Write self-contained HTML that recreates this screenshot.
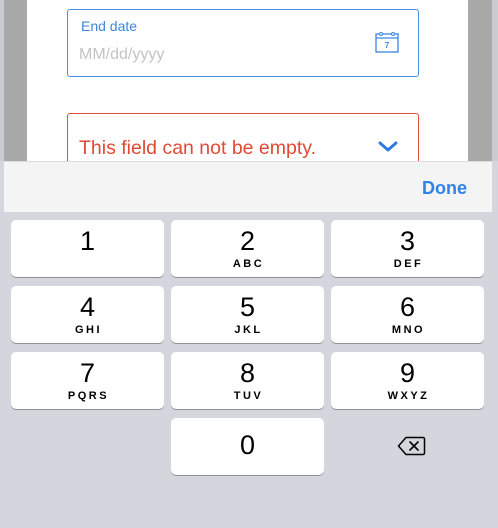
<!DOCTYPE html>
<html><head><meta charset="utf-8"><style>
*{margin:0;padding:0;box-sizing:border-box}
body{width:498px;height:528px;overflow:hidden;background:#d3d6dc;font-family:"Liberation Sans",sans-serif;position:relative}
.top{position:absolute;left:0;top:0;width:498px;height:161px;background:#a8a8a8}
.edgeL{position:absolute;left:0;top:0;width:4px;height:161px;background:#c9ccd1}
.edgeR{position:absolute;right:0;top:0;width:6px;height:161px;background:#c9ccd1}
.card{position:absolute;left:27px;top:0;width:441px;height:161px;background:#fff}
.f1{position:absolute;left:67px;top:9px;width:352px;height:68px;border:1.5px solid #4a90e2;border-radius:3px}
.f1 .lbl{position:absolute;left:13px;top:8px;font-size:14px;color:#3b86e0}
.f1 .ph{position:absolute;left:11px;top:36px;font-size:16px;color:#c4c4c4}
.f2{position:absolute;left:67px;top:113px;width:352px;height:60px;border:1.5px solid #e2503a;border-radius:3px}
.f2 .t{position:absolute;left:11px;top:23px;font-size:19.5px;color:#e04a33}
.bar{position:absolute;left:4px;top:161px;width:488px;height:51px;background:#f4f4f4;border-top:1px solid #dcdcdc}
.done{position:absolute;right:25px;top:16px;font-size:18px;font-weight:bold;color:#2f83e8}
.k{position:absolute;width:153px;height:57px;background:#fff;border-radius:5px;box-shadow:0 1px 0 #8e9096;text-align:center}
.k .d{font-size:27px;color:#000;line-height:27px;margin-top:8px}
.k .l{font-size:11px;font-weight:bold;letter-spacing:2.5px;margin-top:3px;padding-left:2px}
.k.z .d{margin-top:14px}
</style></head><body>
<div class="top"></div><div class="edgeL"></div><div class="edgeR"></div>
<div class="card"></div>
<div class="f1"><div class="lbl">End date</div><div class="ph">MM/dd/yyyy</div>
<svg style="position:absolute;left:307px;top:21px" width="25" height="23" viewBox="0 0 25 23"><rect x="1" y="3" width="22" height="18" fill="none" stroke="#3b86e0" stroke-width="1.3"/><line x1="1" y1="7" x2="23" y2="7" stroke="#3b86e0" stroke-width="1.2"/><circle cx="6" cy="3" r="1.5" fill="#fff" stroke="#3b86e0"/><circle cx="18" cy="3" r="1.5" fill="#fff" stroke="#3b86e0"/><text x="12" y="17" font-size="8" font-weight="bold" fill="#3b86e0" text-anchor="middle" font-family="Liberation Sans">7</text></svg>
</div>
<div class="f2"><div class="t">This field can not be empty.</div>
<svg style="position:absolute;left:310px;top:27px" width="20" height="12" viewBox="0 0 20 12"><path d="M2 2 L10 9 L18 2" fill="none" stroke="#2f7be0" stroke-width="3" stroke-linecap="round" stroke-linejoin="round"/></svg>
</div>
<div class="bar"><div class="done">Done</div></div>
<div class="k" style="left:11px;top:220px"><div class="d">1</div></div>
<div class="k" style="left:171px;top:220px"><div class="d">2</div><div class="l">ABC</div></div>
<div class="k" style="left:331px;top:220px"><div class="d">3</div><div class="l">DEF</div></div>
<div class="k" style="left:11px;top:286px"><div class="d">4</div><div class="l">GHI</div></div>
<div class="k" style="left:171px;top:286px"><div class="d">5</div><div class="l">JKL</div></div>
<div class="k" style="left:331px;top:286px"><div class="d">6</div><div class="l">MNO</div></div>
<div class="k" style="left:11px;top:352px"><div class="d">7</div><div class="l">PQRS</div></div>
<div class="k" style="left:171px;top:352px"><div class="d">8</div><div class="l">TUV</div></div>
<div class="k" style="left:331px;top:352px"><div class="d">9</div><div class="l">WXYZ</div></div>
<div class="k z" style="left:171px;top:418px"><div class="d">0</div></div>
<svg style="position:absolute;left:397px;top:436px" width="29" height="20" viewBox="0 0 29 20"><path d="M9 1.5 H26 a1.5 1.5 0 0 1 1.5 1.5 V17 a1.5 1.5 0 0 1 -1.5 1.5 H9 L1.5 10 Z" fill="none" stroke="#000" stroke-width="1.5" stroke-linejoin="round"/><path d="M13 6 L21 14 M21 6 L13 14" stroke="#000" stroke-width="1.6" stroke-linecap="round"/></svg>
</body></html>
